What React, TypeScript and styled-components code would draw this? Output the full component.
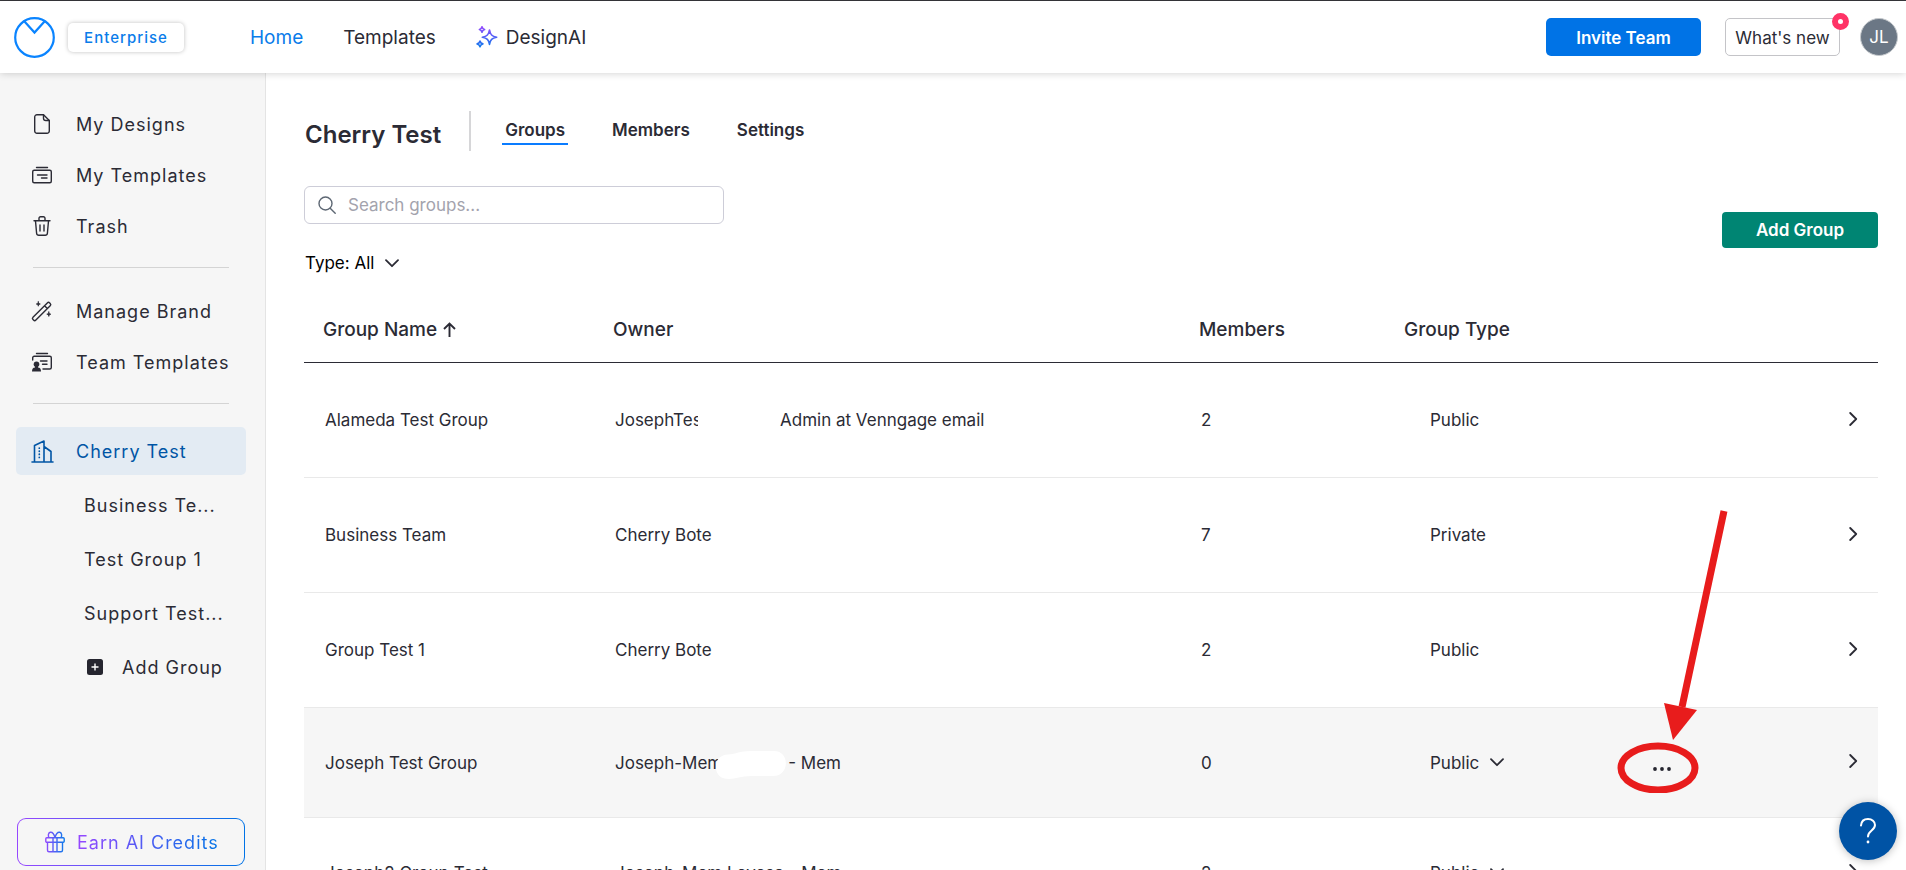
import React from "react";
import styled, { createGlobalStyle, css } from "styled-components";

const GlobalStyle = createGlobalStyle`
  *, *::before, *::after { box-sizing: border-box; }
  html, body { margin: 0; height: 100%; }
  body {
    font-family: Inter, "Liberation Sans", sans-serif;
    font-size: 17px;
    color: #2b2b35;
    background: #fff;
    overflow: hidden;
  }
  button, input, select { font: inherit; color: inherit; }
  button { cursor: pointer; }
  a { color: inherit; text-decoration: none; }
  svg { display: block; flex: none; }
`;

const Page = styled.div`
  display: flex;
  flex-direction: column;
  height: 100vh;
  border-top: 1px solid #39393d;
`;

const Header = styled.header`
  display: flex;
  align-items: center;
  flex: none;
  height: 72px;
  padding: 0 8px 0 14px;
  background: #fff;
  box-shadow: 0 0 8px rgba(0, 0, 0, 0.2);
  z-index: 2;
`;

const PlanBadge = styled.span`
  display: flex;
  align-items: center;
  justify-content: center;
  width: 116px;
  height: 29px;
  margin-left: 13px;
  border-radius: 5px;
  box-shadow: 0 0 4px rgba(0, 0, 0, 0.25);
  font-size: 15px;
  font-weight: 500;
  letter-spacing: 1px;
  color: #0a7cea;
`;

const Nav = styled.nav`
  display: flex;
  align-items: center;
  gap: 40px;
  margin-left: 66px;
  font-size: 19px;
`;

const NavLink = styled.a<{ $active?: boolean }>`
  display: flex;
  align-items: center;
  gap: 8px;
  color: ${(p) => (p.$active ? "#0a7cea" : "#2b2b35")};
`;

const HeaderActions = styled.div`
  display: flex;
  align-items: center;
  margin-left: auto;
`;

const InviteButton = styled.button`
  width: 155px;
  height: 38px;
  padding: 2px 0 0;
  border: 0;
  border-radius: 5px;
  background: #0073e6;
  color: #fff;
  font-weight: 600;
`;

const NewsButton = styled.button`
  position: relative;
  width: 115px;
  height: 38px;
  margin: 0 20px 0 24px;
  padding: 2px 0 0;
  border: 1px solid #c4c4c8;
  border-radius: 5px;
  background: #fff;
`;

const NewsDot = styled.span`
  position: absolute;
  top: -6px;
  right: -10px;
  width: 17px;
  height: 17px;
  border: 6px solid #ff3366;
  border-radius: 50%;
  background: #fff;
`;

const Avatar = styled.button`
  width: 38px;
  height: 38px;
  padding: 0;
  border: 1px solid #c4c8cc;
  border-radius: 50%;
  background: #6b7785;
  color: #fff;
`;

const Body = styled.div`
  display: flex;
  flex: 1;
  min-height: 0;
`;

const Sidebar = styled.aside`
  display: flex;
  flex-direction: column;
  flex: none;
  width: 266px;
  padding: 27px 19px 4px 16px;
  border-right: 1px solid #e4e4e4;
  background: #f6f6f6;
  font-size: 18px;
  letter-spacing: 1px;
`;

const MenuItem = styled.a<{ $active?: boolean }>`
  display: flex;
  align-items: center;
  flex: none;
  gap: 22px;
  height: 48px;
  margin-bottom: 3px;
  padding-left: 14px;
  border-radius: 5px;
  white-space: nowrap;
  ${(p) =>
    p.$active &&
    css`
      margin-top: 4px;
      background: #e3ebf3;
      color: #0055a5;
    `}
`;

const SidebarRule = styled.hr`
  flex: none;
  width: 196px;
  height: 1px;
  margin: 14px 0 19px 17px;
  border: 0;
  background: #d4d4d4;
`;

const SubItem = styled.a`
  display: flex;
  align-items: center;
  flex: none;
  gap: 19px;
  height: 54px;
  padding-left: 68px;
  white-space: nowrap;
`;

const SubItems = styled.div`
  display: flex;
  flex-direction: column;
`;

const AddGroupLink = styled(SubItem)`
  padding-left: 71px;
`;

const CreditsButton = styled.button`
  display: flex;
  align-items: center;
  flex: none;
  gap: 12px;
  height: 48px;
  margin: auto 1px 0;
  padding: 0 0 0 27px;
  border: 1px solid transparent;
  border-radius: 9px;
  background: linear-gradient(#f6f6f6, #f6f6f6) padding-box,
    linear-gradient(90deg, #9747ff, #0073e6) border-box;
  letter-spacing: inherit;
`;

const CreditsLabel = styled.span`
  background: linear-gradient(90deg, #9747ff, #0073e6);
  background-clip: text;
  color: transparent;
`;

const Main = styled.main`
  flex: 1;
  min-width: 0;
  padding: 38px 28px 0 38px;
  overflow: hidden;
`;

const TitleRow = styled.div`
  display: flex;
  align-items: center;
`;

const Title = styled.h1`
  margin: 0;
  padding: 8px 0 0 1px;
  font-size: 24px;
  line-height: 32px;
  font-weight: 600;
`;

const Tabs = styled.nav`
  display: flex;
  align-items: flex-start;
  gap: 41px;
  height: 40px;
  margin-left: 28px;
  padding: 6px 0 0 31px;
  border-left: 2px solid #d6d6d8;
`;

const Tab = styled.a<{ $active?: boolean }>`
  height: 28px;
  padding: 0 3px;
  border-bottom: 2px solid ${(p) => (p.$active ? "#0a7cff" : "transparent")};
  font-weight: 600;
  line-height: 26px;
`;

const Toolbar = styled.div`
  display: flex;
  align-items: center;
  justify-content: space-between;
  margin-top: 35px;
`;

const Filters = styled.div`
  display: flex;
  flex-direction: column;
  align-items: flex-start;
  gap: 22px;
`;

const SearchBox = styled.label`
  display: flex;
  align-items: center;
  gap: 12px;
  width: 420px;
  height: 38px;
  padding-left: 13px;
  border: 1px solid #cdcdd8;
  border-radius: 6px;
`;

const SearchInput = styled.input`
  flex: 1;
  min-width: 0;
  border: 0;
  outline: 0;
  padding: 0;
  background: none;
  &::placeholder { color: #a3a3ad; opacity: 1; }
`;

const TypeButton = styled.button`
  display: flex;
  align-items: center;
  gap: 11px;
  height: 34px;
  padding: 0 0 0 1px;
  border: 0;
  background: none;
  color: #000;
`;

const AddGroupButton = styled.button`
  width: 156px;
  height: 36px;
  margin-bottom: 6px;
  border: 0;
  border-radius: 4px;
  background: #008573;
  color: #fff;
  font-weight: 600;
`;

const Table = styled.table`
  width: 100%;
  margin-top: 17px;
  border-collapse: separate;
  border-spacing: 0;
  table-layout: fixed;
`;

const Col = styled.col<{ $width?: number }>`
  width: ${(p) => (p.$width ? `${p.$width}px` : "auto")};
`;

const HeadCell = styled.th`
  height: 66px;
  padding: 0 0 0 19px;
  border-bottom: 1px solid #2b2b35;
  font-size: 19px;
  font-weight: 500;
  text-align: left;
`;

const HeadLabel = styled.span`
  display: flex;
  align-items: center;
  gap: 6px;
`;

const Row = styled.tr<{ $editable?: boolean; $hover?: boolean }>`
  height: ${(p) => (p.$editable ? 110 : 115)}px;
  background: ${(p) => (p.$hover ? "#f6f6f6" : "transparent")};
`;

const Cell = styled.td<{ $inset?: number }>`
  padding: 0 0 0 ${(p) => p.$inset ?? 21}px;
  border-bottom: 1px solid #e9e9e9;
  white-space: nowrap;
`;

const Inline = styled.span`
  display: flex;
  align-items: center;
`;

const Clipped = styled.span`
  width: 83px;
  margin-right: 82px;
  overflow: hidden;
`;

const Smudge = styled.svg`
  margin: 4px 2px 0 -6px;
`;

const TypePicker = styled.button`
  display: flex;
  align-items: center;
  gap: 11px;
  padding: 0;
  border: 0;
  background: none;
`;

const IconButton = styled.button`
  position: relative;
  display: flex;
  margin-bottom: 3px;
  padding: 0;
  border: 0;
  background: none;
`;

const MoreButton = styled(IconButton)`
  margin: 12px 0 0;
`;

const Callout = styled.svg`
  position: absolute;
  right: -65px;
  bottom: -22px;
  pointer-events: none;
`;

const HelpButton = styled.button`
  position: fixed;
  right: 9px;
  bottom: 10px;
  display: flex;
  align-items: center;
  justify-content: center;
  width: 58px;
  height: 58px;
  padding: 0;
  border: 0;
  border-radius: 50%;
  background: #0053a5;
  box-shadow: 0 1px 8px rgba(0, 0, 0, 0.25);
  z-index: 3;
`;

const stroke = {
  fill: "none",
  stroke: "currentColor",
  strokeLinecap: "round" as const,
  strokeLinejoin: "round" as const,
};

const Logo = () => (
  <svg width="41" height="41" viewBox="0 0 41 41" fill="none" stroke="#0a84ff" strokeWidth="2.200">
    <circle cx="20.500" cy="20.500" r="19.300" />
    <path d="M10.500 4.500 20.500 15.500 30.500 4.500" />
  </svg>
);

const Sparkles = () => (
  <svg width="22" height="22" viewBox="0 0 22 22" fill="none" strokeWidth="1.600" strokeLinejoin="round">
    <defs>
      <linearGradient id="spark" x1="0" y1="0" x2="0" y2="22" gradientUnits="userSpaceOnUse">
        <stop offset="0" stopColor="#9747ff" />
        <stop offset="1" stopColor="#0a7cea" />
      </linearGradient>
    </defs>
    <g stroke="url(#spark)">
      <path d="M13.500 4c.8 4.600 2.400 6.300 7.200 7.200-4.800.9-6.400 2.600-7.200 7.200-.8-4.600-2.400-6.300-7.200-7.200 4.800-.9 6.400-2.600 7.200-7.200Z" />
      <path d="M6 .8c.4 1.700.9 2.300 2.600 2.700C6.900 3.900 6.400 4.500 6 6.200 5.600 4.500 5.100 3.900 3.400 3.500 5.100 3.100 5.600 2.500 6 .8Z" />
      <path d="M4 15c.4 1.900 1 2.500 2.900 2.900C5 18.300 4.400 18.900 4 20.800 3.600 18.900 3 18.300 1.100 17.900 3 17.500 3.600 16.900 4 15Z" />
    </g>
  </svg>
);

const FileIcon = () => (
  <svg width="24" height="24" viewBox="0 0 24 24" {...stroke} strokeWidth="1.400">
    <path d="M13.500 2.700H7A2.300 2.300 0 0 0 4.700 5v14A2.300 2.300 0 0 0 7 21.300h10a2.300 2.300 0 0 0 2.300-2.300V8.500Z" />
    <path d="M13.500 2.700v3.500a2.300 2.300 0 0 0 2.300 2.300h3.500" />
  </svg>
);

const TemplatesIcon = () => (
  <svg width="24" height="24" viewBox="0 0 24 24" {...stroke} strokeWidth="1.400">
    <rect x="2.700" y="7.200" width="18.600" height="12.600" rx="1.500" />
    <path d="M6.500 4.500h11M7.500 12h9.500M11.500 15h5.500" />
  </svg>
);

const TrashIcon = () => (
  <svg width="24" height="24" viewBox="0 0 24 24" {...stroke} strokeWidth="1.400">
    <path d="M4 6.800h16M5.500 7l1.100 12.200A2.200 2.200 0 0 0 8.800 21.200h6.400a2.200 2.200 0 0 0 2.200-2L18.500 7M9 6.500V4.200A1.500 1.500 0 0 1 10.500 2.700h3A1.500 1.500 0 0 1 15 4.200v2.300M10 11v6M14 11v6" />
  </svg>
);

const WandIcon = () => (
  <svg width="24" height="24" viewBox="0 0 24 24" {...stroke} strokeWidth="1.400">
    <path d="M3 18.200 17.300 3.900a1.700 1.700 0 0 1 2.400 0l.5.500a1.700 1.700 0 0 1 0 2.400L5.900 21.100a1.700 1.700 0 0 1-2.400 0l-.5-.5a1.700 1.700 0 0 1 0-2.400ZM14.500 6.700l2.900 2.900" />
    <path d="M8.300 2.800c.3 1.600.7 1.900 2 2.200-1.300.3-1.700.7-2 2.200-.3-1.500-.7-1.900-2-2.200 1.300-.3 1.700-.6 2-2.200ZM18.800 13c.3 1.600.7 1.900 2 2.200-1.300.3-1.700.7-2 2.200-.3-1.500-.7-1.900-2-2.200 1.300-.3 1.700-.6 2-2.200Z" fill="currentColor" strokeWidth=".8" />
  </svg>
);

const TeamTemplatesIcon = () => (
  <svg width="24" height="24" viewBox="0 0 24 24" {...stroke} strokeWidth="1.400">
    <path d="M6.500 3.500h11M2.700 10V7.700A1.500 1.500 0 0 1 4.200 6.200h15.600a1.500 1.500 0 0 1 1.500 1.500v9.800a1.500 1.500 0 0 1-1.500 1.500H13M10.500 11H17M12.500 14.200H17" />
    <circle cx="6.500" cy="14.200" r="2.800" fill="currentColor" stroke="none" />
    <path d="M5 16h3v1.500c2 .3 3 1.200 3 4H2c0-2.800 1-3.700 3-4Z" fill="currentColor" stroke="none" />
  </svg>
);

const BuildingIcon = () => (
  <svg width="24" height="24" viewBox="0 0 24 24" {...stroke} strokeWidth="1.600">
    <path d="M2 23h21M4.500 22.500V6.500L14 2v20.500M14 7.500 21 12.500v10" />
    <path d="M9.300 9v12" strokeDasharray=".2 2.900" strokeWidth="1.700" />
  </svg>
);

const PlusBox = () => (
  <svg width="16" height="16" viewBox="0 0 16 16">
    <rect width="16" height="16" rx="2.500" fill="#25252f" />
    <path d="M8 4.500v7M4.500 8h7" stroke="#fff" strokeWidth="1.400" />
  </svg>
);

const GiftIcon = () => (
  <svg width="20" height="22" viewBox="0 0 20 22" fill="none" strokeWidth="1.400" strokeLinejoin="round">
    <defs>
      <linearGradient id="gift" x1="0" y1="0" x2="20" y2="0" gradientUnits="userSpaceOnUse">
        <stop offset="0" stopColor="#9747ff" />
        <stop offset="1" stopColor="#0a7cea" />
      </linearGradient>
    </defs>
    <g stroke="url(#gift)">
      <rect x=".8" y="6.800" width="18.400" height="4.400" rx="1" />
      <path d="M2.500 11.200v8a1.500 1.500 0 0 0 1.500 1.500h12a1.500 1.500 0 0 0 1.500-1.500v-8M8 6.800v13.900M12 6.800v13.900M10 6.500C9 3 7 1 5.300 1.300 3.300 1.700 3 4 3.800 6.500M10 6.500C11 3 13 1 14.700 1.300c2 .4 2.300 2.700 1.500 5.200" />
    </g>
  </svg>
);

const SearchIcon = () => (
  <svg width="18" height="18" viewBox="0 0 18 18" fill="none" stroke="#5d6773" strokeWidth="1.400" strokeLinecap="round">
    <circle cx="7.500" cy="7.500" r="6.500" />
    <path d="m12.200 12.200 5 5" />
  </svg>
);

const ChevronDown = () => (
  <svg width="14" height="9" viewBox="0 0 14 9" {...stroke} stroke="#2b2b35" strokeWidth="1.800">
    <path d="m1 1.200 6 6 6-6" />
  </svg>
);

const ChevronRight = () => (
  <svg width="9" height="14" viewBox="0 0 9 14" {...stroke} strokeWidth="1.800">
    <path d="m1.200 1 6 6-6 6" />
  </svg>
);

const ArrowUp = () => (
  <svg width="13" height="15" viewBox="0 0 13 15" fill="none" stroke="#2b2b35" strokeWidth="1.900">
    <path d="M6.500 15V1.500M1 7l5.500-5.500L12 7" />
  </svg>
);

const Dots = () => (
  <svg width="18" height="4" viewBox="0 0 18 4" fill="#25252f">
    <circle cx="2" cy="2" r="1.900" />
    <circle cx="9" cy="2" r="1.900" />
    <circle cx="16" cy="2" r="1.900" />
  </svg>
);

type Group = {
  name: string;
  owner: React.ReactNode;
  members: number;
  type: string;
  editable?: boolean;
  hover?: boolean;
};

const groups: Group[] = [
  {
    name: "Alameda Test Group",
    owner: (
      <Inline>
        <Clipped>JosephTes</Clipped>
        Admin at Venngage email
      </Inline>
    ),
    members: 2,
    type: "Public",
  },
  { name: "Business Team", owner: "Cherry Bote", members: 7, type: "Private" },
  { name: "Group Test 1", owner: "Cherry Bote", members: 2, type: "Public" },
  {
    name: "Joseph Test Group",
    owner: (
      <Inline>
        Joseph-Mem
        <Smudge width="70" height="28" viewBox="0 0 70 28" fill="#fff">
          <path d="M0 18C-1 9 4 4 12 3.500 20 3 24 0 34 0h24c16 0 16 25-1 25H36c-12 0-16 3-23 3C5 28 1 24 0 18Z" />
        </Smudge>
        - Mem
      </Inline>
    ),
    members: 0,
    type: "Public",
    editable: true,
    hover: true,
  },
  { name: "Joseph2 Group Test", owner: "Joseph-Mem Leyesa - Mem", members: 2, type: "Public", editable: true },
];

export default function App() {
  return (
    <Page>
      <GlobalStyle />
      <Header>
        <a href="#" aria-label="Dashboard"><Logo /></a>
        <PlanBadge>Enterprise</PlanBadge>
        <Nav>
          <NavLink href="#" $active>Home</NavLink>
          <NavLink href="#">Templates</NavLink>
          <NavLink href="#"><Sparkles />DesignAI</NavLink>
        </Nav>
        <HeaderActions>
          <InviteButton>Invite Team</InviteButton>
          <NewsButton>What's new<NewsDot /></NewsButton>
          <Avatar>JL</Avatar>
        </HeaderActions>
      </Header>
      <Body>
        <Sidebar>
          <MenuItem href="#"><FileIcon />My Designs</MenuItem>
          <MenuItem href="#"><TemplatesIcon />My Templates</MenuItem>
          <MenuItem href="#"><TrashIcon />Trash</MenuItem>
          <SidebarRule />
          <MenuItem href="#"><WandIcon />Manage Brand</MenuItem>
          <MenuItem href="#"><TeamTemplatesIcon />Team Templates</MenuItem>
          <SidebarRule />
          <MenuItem href="#" $active><BuildingIcon />Cherry Test</MenuItem>
          <SubItems>
            <SubItem href="#">Business Te...</SubItem>
            <SubItem href="#">Test Group 1</SubItem>
            <SubItem href="#">Support Test...</SubItem>
            <AddGroupLink href="#"><PlusBox />Add Group</AddGroupLink>
          </SubItems>
          <CreditsButton>
            <GiftIcon />
            <CreditsLabel>Earn AI Credits</CreditsLabel>
          </CreditsButton>
        </Sidebar>
        <Main>
          <TitleRow>
            <Title>Cherry Test</Title>
            <Tabs>
              <Tab href="#" $active>Groups</Tab>
              <Tab href="#">Members</Tab>
              <Tab href="#">Settings</Tab>
            </Tabs>
          </TitleRow>
          <Toolbar>
            <Filters>
              <SearchBox>
                <SearchIcon />
                <SearchInput type="text" aria-label="Search groups" placeholder="Search groups..." />
              </SearchBox>
              <TypeButton>Type: All<ChevronDown /></TypeButton>
            </Filters>
            <AddGroupButton>Add Group</AddGroupButton>
          </Toolbar>
          <Table>
            <colgroup>
              <Col $width={290} />
              <Col />
              <Col $width={205} />
              <Col $width={248} />
              <Col $width={195} />
              <Col $width={50} />
            </colgroup>
            <thead>
              <tr>
                <HeadCell><HeadLabel>Group Name<ArrowUp /></HeadLabel></HeadCell>
                <HeadCell>Owner</HeadCell>
                <HeadCell>Members</HeadCell>
                <HeadCell>Group Type</HeadCell>
                <HeadCell />
                <HeadCell />
              </tr>
            </thead>
            <tbody>
              {groups.map((g) => (
                <Row key={g.name} $editable={g.editable} $hover={g.hover}>
                  <Cell>{g.name}</Cell>
                  <Cell>{g.owner}</Cell>
                  <Cell>{g.members}</Cell>
                  <Cell $inset={45}>
                    {g.editable ? <TypePicker>{g.type}<ChevronDown /></TypePicker> : g.type}
                  </Cell>
                  <Cell $inset={20}>
                    {g.hover && (
                      <MoreButton aria-label="More actions">
                        <Dots />
                        <Callout width="120" height="290" viewBox="0 0 120 290">
                          <ellipse cx="42" cy="265" rx="37" ry="22" fill="none" stroke="#e81c1c" strokeWidth="7" />
                          <path d="M108 8 66 204" stroke="#e81c1c" strokeWidth="7" />
                          <path d="M48 200 81 207 57 237Z" fill="#e81c1c" />
                        </Callout>
                      </MoreButton>
                    )}
                  </Cell>
                  <Cell>
                    <IconButton aria-label={`Open ${g.name}`}><ChevronRight /></IconButton>
                  </Cell>
                </Row>
              ))}
            </tbody>
          </Table>
        </Main>
      </Body>
      <HelpButton aria-label="Help">
        <svg width="16" height="26" viewBox="0 0 16 26" fill="none" stroke="#fff" strokeWidth="2" strokeLinecap="round">
          <path d="M1 7.500C1.300 3.500 4 1 8 1s7 2.600 7 6c0 5.500-7 5.500-7 11.500" />
          <circle cx="8" cy="24" r="1.400" fill="#fff" stroke="none" />
        </svg>
      </HelpButton>
    </Page>
  );
}
